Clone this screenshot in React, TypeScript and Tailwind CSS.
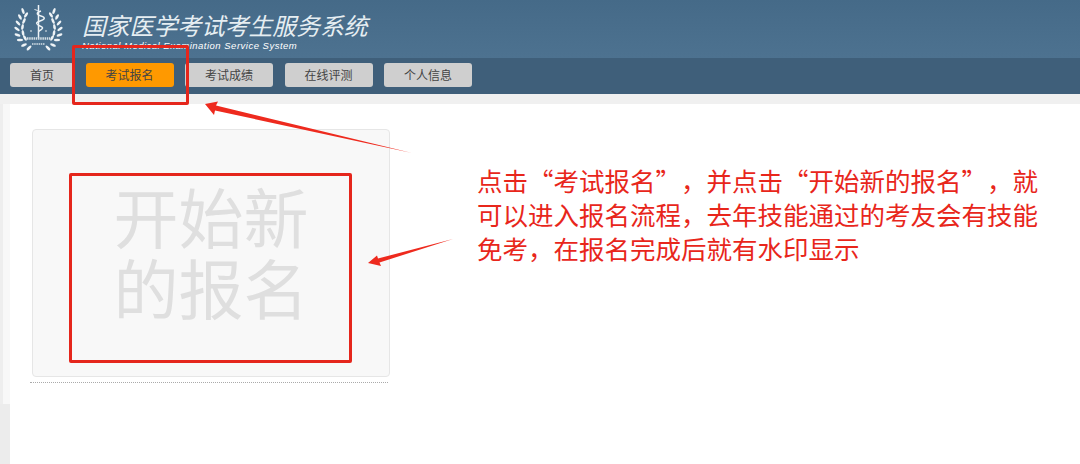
const cjk = "font-['Noto_Sans_CJK_SC','Liberation_Sans',sans-serif]"

const navItems = [
  { label: '首页', width: 'w-[64px]' },
  { label: '考试报名', width: 'w-[88px]' },
  { label: '考试成绩', width: 'w-[88px]' },
  { label: '在线评测', width: 'w-[88px]' },
  { label: '个人信息', width: 'w-[88px]' },
]

// leaf positions along the left branch, mirrored for the right one
const leaves = [
  [9, 7, -20], [6, 13, -30], [4, 19, -40], [3, 25, -55], [3.5, 31, -70], [6, 36, -90], [10, 41, -115], [15, 44, -135],
  [12, 11, 35], [10, 17, 25], [8.5, 23, 10], [9, 29, -10], [11, 34, -30],
]

function Logo() {
  return (
    <svg width="50" height="50" viewBox="0 0 50 50" fill="none" className="shrink-0">
      <path d="M24.5 1v33" stroke="#eef3f6" strokeWidth="1.5" />
      <path d="M27 7c-5 1.500-5 3.500 0 5s4 3.500-1 5-4 3.500 0 5 3 3-1 5" stroke="#eef3f6" strokeWidth="1.400" />
      <path d="M20.500 5.500c2 .500 3 1 4 2" stroke="#eef3f6" />
      {leaves.map(([x, y, r], i) => (
        <g key={i}>
          <ellipse cx={x} cy={y} rx="1.300" ry="3.100" fill="#eef3f6" transform={`rotate(${r} ${x} ${y})`} />
          <ellipse cx={49 - x} cy={y} rx="1.300" ry="3.100" fill="#eef3f6" transform={`rotate(${-r} ${49 - x} ${y})`} />
        </g>
      ))}
      <path d="M16 27h2M24 27h2M31 27h2" stroke="#dfe7ec" strokeWidth="1.200" />
      <path d="M13 34.500h23" stroke="#d5e0e6" strokeWidth="2.600" strokeDasharray="1.500 .7" />
      <path d="M18 40h13" stroke="#d5e0e6" strokeWidth="1.600" strokeDasharray="1.500 .7" />
    </svg>
  )
}

function Arrows() {
  return (
    <svg width="1080" height="464" viewBox="0 0 1080 464" className="absolute left-0 top-0 pointer-events-none">
      <polygon points="205,104 218,101.500 216,105.500 412,153 215,110.500 214,115" fill="#ee2a1e" />
      <polygon points="368,263 377,255.500 378,258.500 453,239 379.500,262.500 381,266" fill="#ee2a1e" />
    </svg>
  )
}

export default function App() {
  return (
    <div className={`relative w-[1080px] h-[464px] overflow-hidden bg-white ${cjk}`}>
      <header className="h-[58px] bg-gradient-to-b from-[#456a88] to-[#4d7290] flex items-center pl-[14px]">
        <Logo />
        <div className="ml-[18px] pt-[3px]">
          <div className="text-[23.8px] leading-[30px] italic font-normal text-[#e6eef2]">国家医学考试考生服务系统</div>
          <div className="text-[9.5px] leading-[11px] italic font-normal text-white font-['Liberation_Sans',sans-serif] tracking-[0.5px]">National Medical Examination Service System</div>
        </div>
      </header>
      <nav className="h-[36px] bg-[#3f5f7a] flex items-start pt-[5px] pl-[10px] gap-[11.500px]">
        {navItems.map((item, i) => (
          <div
            key={item.label}
            className={`h-[24px] ${item.width} rounded-[3px] flex items-center justify-center text-[12px] text-[#444] ${i === 1 ? 'bg-[#ff9900]' : 'bg-[#cfcfcf]'}`}
          >
            {item.label}
          </div>
        ))}
      </nav>
      <div className="h-[370px] flex flex-col">
        <div className="h-[10px] bg-[#f0f0f0] shrink-0" />
        <div className="flex-1 flex">
          <div className="w-[10px] flex flex-col shrink-0">
            <div className="h-[300px] bg-[#f8f8f8] border-l-[3px] border-[#eeeeee]" />
            <div className="flex-1 bg-[#ececec]" />
          </div>
          <main className="flex-1 bg-white rounded-tl-[4px] pt-[25px] pl-[20px] flex">
            <div className="w-[360px]">
              <div className="ml-[2px] w-[358px] h-[248px] bg-[#f8f8f8] border border-[#e6e6e6] rounded-[4px] flex items-center justify-center">
                <div className="w-[200px] text-center text-[65px] leading-[71px] text-[#dfdfdf] pb-[4px]">开始新的报名</div>
              </div>
              <div className="mt-[5px] border-t border-dotted border-[#aaa] w-[358px]" />
            </div>
            <p lang="zh-CN" className="ml-[87px] mt-[34px] w-[566px] text-[25.5px] leading-[34px] text-[#e8261b] [text-spacing-trim:space-all]">
              点击“考试报名”，并点击“开始新的报名”，就可以进入报名流程，去年技能通过的考友会有技能免考，在报名完成后就有水印显示
            </p>
          </main>
        </div>
      </div>
      {/* red annotation boxes */}
      <div className="absolute left-[72px] top-[45px] w-[117px] h-[60px] border-[3px] border-[#e5261c] rounded-[2px]" />
      <div className="absolute left-[69px] top-[173px] w-[283px] h-[190px] border-[3px] border-[#e5261c] rounded-[2px]" />
      <Arrows />
    </div>
  )
}
